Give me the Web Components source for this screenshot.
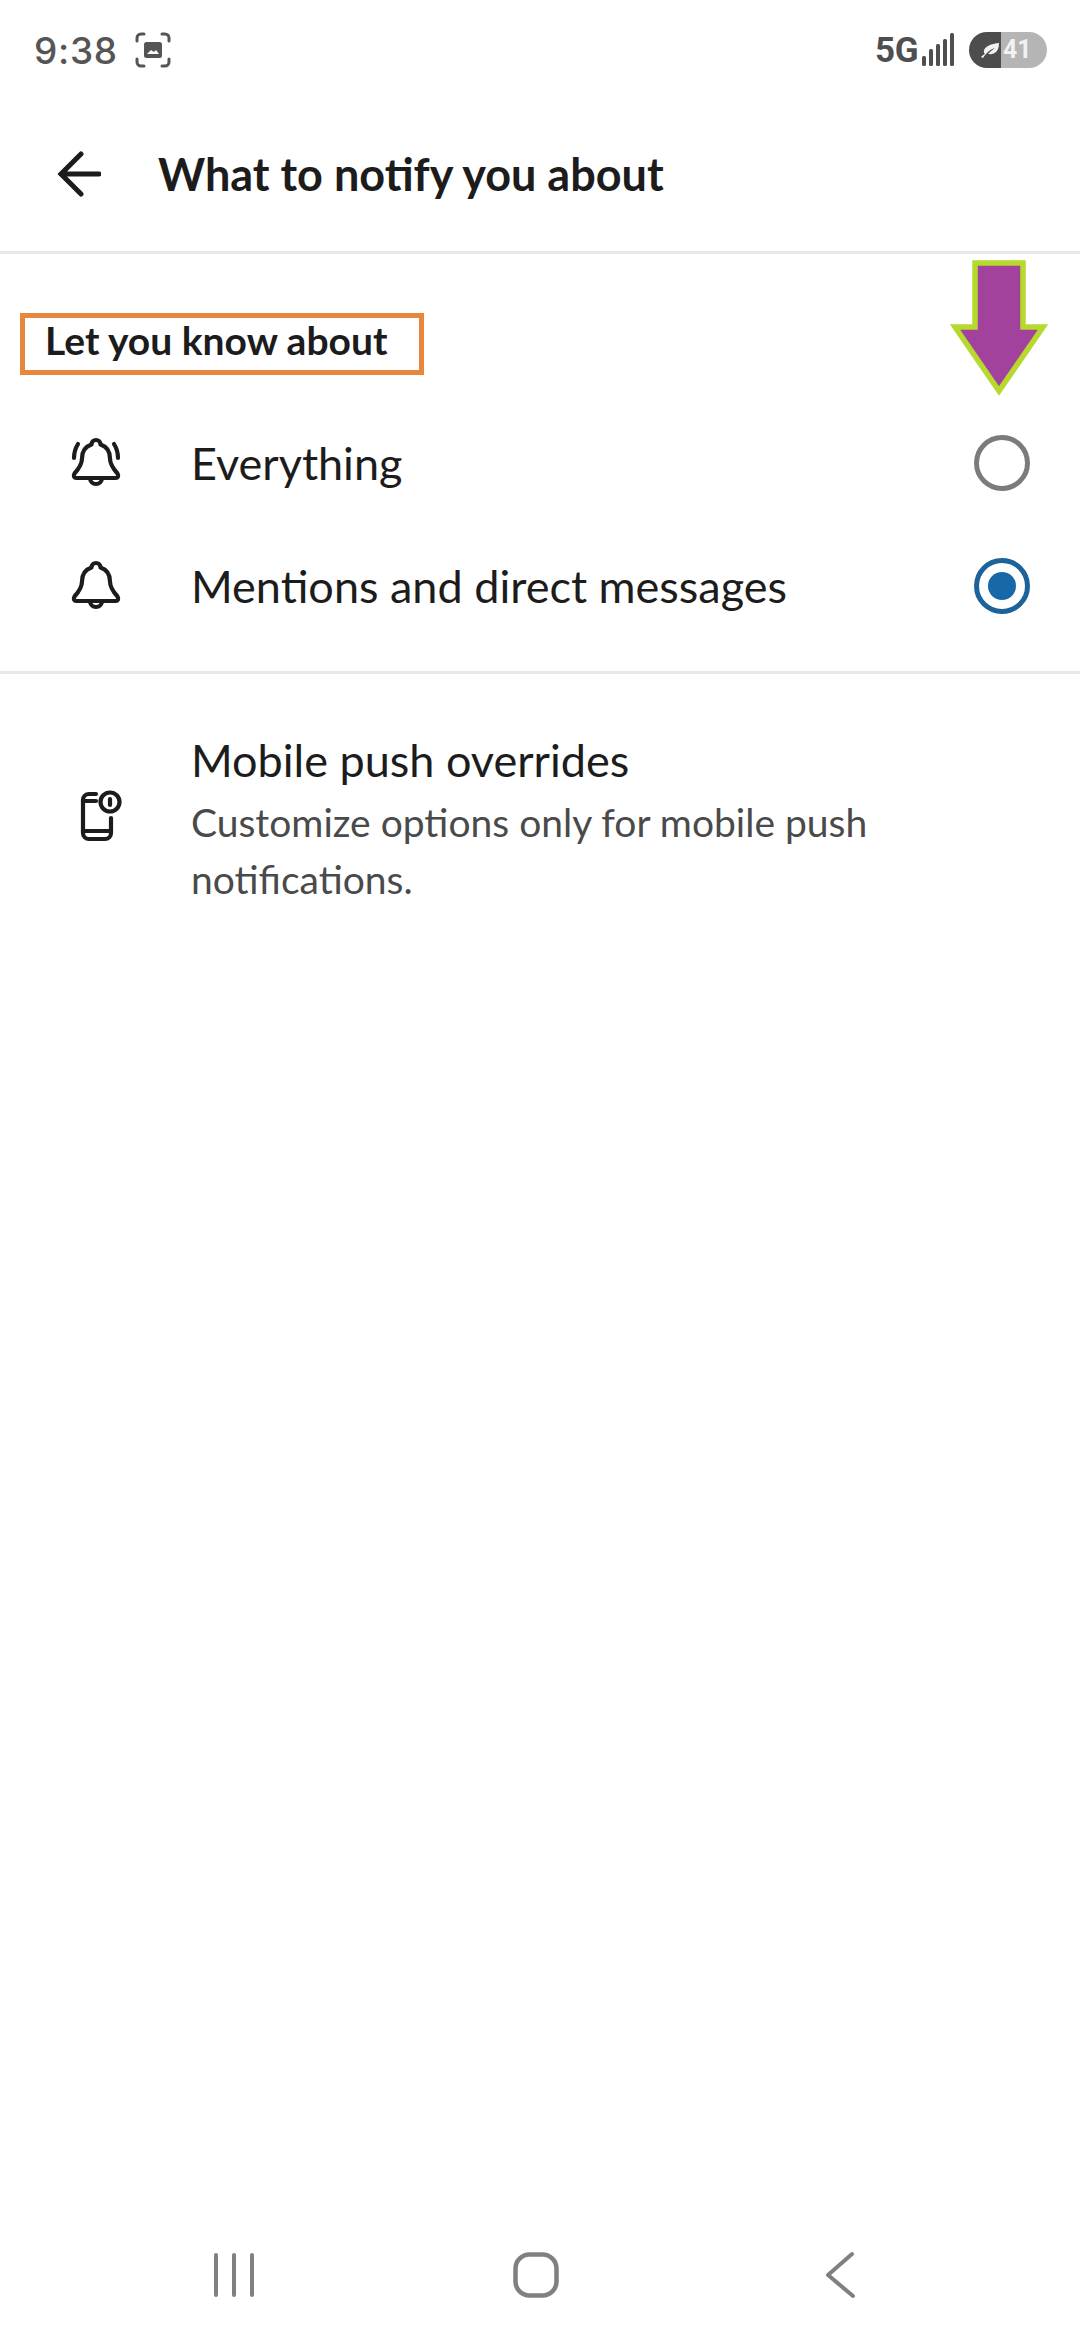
<!DOCTYPE html>
<html><head><meta charset="utf-8">
<style>
html,body{margin:0;padding:0;background:#fff}
body{width:1080px;height:2340px;font-family:Lato,"Liberation Sans",sans-serif;color:#1d1c1d;position:relative;overflow:hidden;display:flex;flex-direction:column}
</style></head><body>
<status-bar></status-bar>
<app-header>What to notify you about</app-header>
<section-label>Let you know about</section-label>
<option-row icon="ring">Everything</option-row>
<option-row icon="bell" checked style="margin-top:3px">Mentions and direct messages</option-row>
<hr-line></hr-line>
<push-row title="Mobile push overrides">Customize options only for mobile push notifications.</push-row>
<div style="flex:1"></div>
<nav-bar></nav-bar>
<callout-arrow></callout-arrow>
<script>
function def(name, html, setup){
  customElements.define(name, class extends HTMLElement{
    constructor(){super();this.attachShadow({mode:'open'}).innerHTML=html;}
    connectedCallback(){ if(setup) setup(this); }
  });
}
def('status-bar',`<style>
:host{display:flex;align-items:center;height:100px;padding:0 34px;box-sizing:border-box;color:#555;font-family:Inter,Roboto,sans-serif}
.t{font-size:37px;font-weight:500;letter-spacing:.7px;margin-right:17px;line-height:1}
.sp{flex:1}
.g{font-family:Roboto,sans-serif;font-weight:700;font-size:35px;color:#4f4f4f;margin-right:3px;letter-spacing:-.5px}
.bat{display:flex;width:78px;height:36px;border-radius:18px;overflow:hidden;margin-left:14px;margin-right:-1px}
.bat .a{width:32px;background:#4d4d4d;display:flex;align-items:center;justify-content:flex-end}
.bat .b{flex:1;background:#b5b5b5;color:#f2f2f2;font-family:Roboto,sans-serif;font-weight:700;font-size:25px;line-height:36px;padding-left:2px}
</style>
<span class="t">9:38</span>
<svg width="36" height="36" viewBox="0 0 36 36" fill="none" stroke="#555" stroke-width="3" stroke-linecap="round"><path d="M2 9V6a4 4 0 0 1 4-4h3M27 2h3a4 4 0 0 1 4 4v3M34 27v3a4 4 0 0 1-4 4h-3M9 34H6a4 4 0 0 1-4-4v-3"/><rect x="9" y="10" width="18" height="16" rx="2.5" fill="#555" stroke="none"/><path d="M12 22l4-4 3 2 2-2 3 4z" fill="#fff" stroke="none"/></svg>
<span class="sp"></span>
<span class="g">5G</span>
<svg width="34" height="36" viewBox="0 0 34 36" fill="#4f4f4f"><rect x="1" y="24" width="4" height="10" rx="1.5"/><rect x="8" y="17" width="4" height="17" rx="1.5"/><rect x="15" y="12" width="4" height="22" rx="1.5"/><rect x="22" y="7" width="4" height="27" rx="1.5"/><rect x="29" y="1" width="4" height="33" rx="1.5"/></svg>
<span class="bat"><span class="a"><svg width="22" height="18" viewBox="0 0 22 18"><path d="M2 16c1-1 2-2 4-3C3 10 6 3 20 2c0 7-3 12-11 11 2-2 4-4 7-6-4 1-9 5-12 10z" fill="#f2f2f2"/></svg></span><span class="b">41</span></span>`);
def('app-header',`<style>
:host{display:flex;align-items:center;height:154px;box-sizing:border-box;border-bottom:3px solid #e8e8e8;padding-left:57px;padding-bottom:4px}
svg{margin-right:57px;flex:none}
.t{font-size:45px;font-weight:700;color:#1d1c1d;white-space:nowrap}
</style>
<svg width="44" height="46" viewBox="0 0 44 46" fill="none" stroke="#1d1c1d" stroke-width="5" stroke-linecap="round" stroke-linejoin="miter"><path d="M42 23H4M24 3L4 23l20 20"/></svg>
<span class="t"><slot></slot></span>`);
def('section-label',`<style>
:host{display:block;margin:59px 0 28px 20px;width:404px;height:62px;box-sizing:border-box;border:5px solid #e8873c;padding-left:20px;font-size:39px;font-weight:700;line-height:44px;color:#1d1c1d;white-space:nowrap}
</style><slot></slot>`);
const BELL=`<path d="M26 3a4.5 4.5 0 0 1 4.5 4.5c6 2 9.5 7 9.5 14 0 6 3 10 7.5 15 1.5 2.5.5 4.5-2 4.5H6.500c-2.500 0-3.500-2-2-4.500C9 31.500 12 27.500 12 21.500c0-7 3.500-12 9.500-14A4.500 4.500 0 0 1 26 3z"/><path d="M20 41a6 6 0 0 0 12 0"/>`;
const ICONS={
 ring:`<svg width="52" height="52" viewBox="0 0 52 52" fill="none" stroke="#1d1c1d" stroke-width="4.2" stroke-linecap="round" stroke-linejoin="round">${BELL}<path d="M4 21c0-5 1.500-10 4-14M48 21c0-5-1.500-10-4-14"/></svg>`,
 bell:`<svg width="52" height="52" viewBox="0 0 52 52" fill="none" stroke="#1d1c1d" stroke-width="4.2" stroke-linecap="round" stroke-linejoin="round">${BELL}</svg>`
};
def('option-row',`<style>
:host{display:flex;align-items:center;height:120px;padding-left:70px;font-size:45px;color:#1d1c1d}
#i{width:52px;height:52px;margin-right:69px;display:flex}
.t{flex:1;white-space:nowrap}
.r{width:56px;height:56px;box-sizing:border-box;border-radius:50%;border:5px solid #7b7b7b;margin-right:50px;display:flex;align-items:center;justify-content:center}
:host([checked]) .r{border-color:#1d6299}
:host([checked]) .r::after{content:"";width:28px;height:28px;border-radius:50%;background:#1868a8}
</style><span id="i"></span><span class="t"><slot></slot></span><span class="r"></span>`,
 el=>{el.shadowRoot.getElementById('i').innerHTML=ICONS[el.getAttribute('icon')];});
def('hr-line',`<style>:host{display:block;height:3px;background:#e8e8e8;margin-top:25px}</style>`);
def('push-row',`<style>
:host{display:flex;align-items:center;padding:57px 140px 0 70px;}
svg{flex:none;margin:-6px 69px 0 0}
.t{font-size:45px;line-height:58px;color:#1d1c1d}
.s{font-size:39px;line-height:57px;color:#4a4a4a;margin-top:5px}
</style>
<svg width="52" height="56" viewBox="0 0 52 56" fill="none" stroke="#1d1c1d" stroke-width="4.2" stroke-linecap="round" stroke-linejoin="round"><path d="M26 5h-7a6 6 0 0 0-6 6v33a6 6 0 0 0 6 6h16a6 6 0 0 0 6-6V29"/><path d="M13 42h28"/><path d="M13 12h13"/><circle cx="40" cy="13" r="9.500"/><path d="M40 10v6"/></svg>
<div><div class="t" id="t"></div><div class="s"><slot></slot></div></div>`,
 el=>{el.shadowRoot.getElementById('t').textContent=el.getAttribute('title');});
def('nav-bar',`<style>
:host{display:flex;align-items:center;height:130px;padding:0 0 0 212px;box-sizing:border-box}
</style>
<svg style="margin-right:257px" width="44" height="44" viewBox="0 0 44 44" fill="none" stroke="#808080" stroke-width="4" stroke-linecap="round"><path d="M4 2v40M22 2v40M40 2v40"/></svg>
<svg style="margin-right:265px" width="46" height="46" viewBox="0 0 46 46" fill="none" stroke="#808080" stroke-width="4.500"><rect x="2.500" y="2.500" width="41" height="41" rx="14"/></svg>
<svg width="32" height="48" viewBox="0 0 32 48" fill="none" stroke="#808080" stroke-width="4" stroke-linecap="round" stroke-linejoin="round"><path d="M28 3L4 24l25 21"/></svg>`);
def('callout-arrow',`<style>
:host{position:absolute;left:948px;top:258px;width:102px;height:140px;display:block}
</style><svg width="102" height="140" viewBox="0 0 102 140"><path d="M27 5h48v64h20L51 133 7 69h20z" fill="#a2429c" stroke="#b6d92e" stroke-width="5.500" stroke-linejoin="miter"/></svg>`);
</script>
</body></html>
